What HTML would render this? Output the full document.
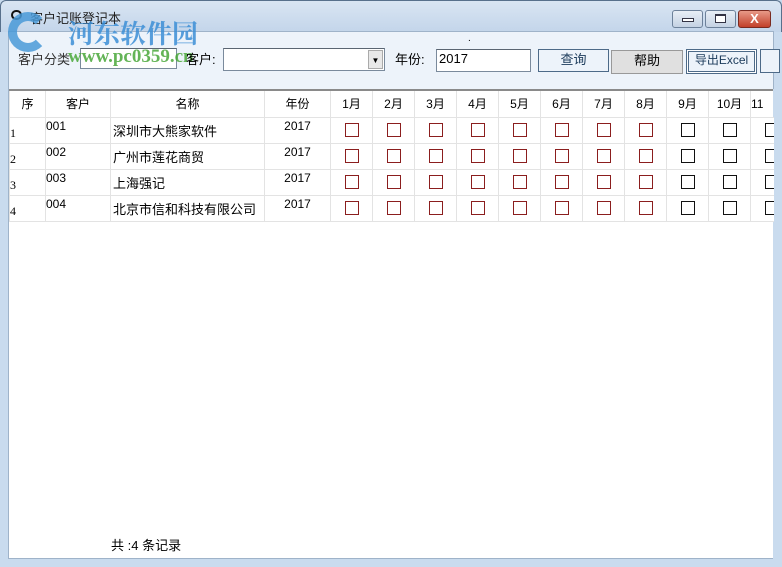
<!DOCTYPE html>
<html><head><meta charset="utf-8"><style>
*{margin:0;padding:0;box-sizing:border-box}
body{width:782px;height:567px;overflow:hidden;background:#c9dbee;font-family:"Liberation Sans","Noto Sans CJK SC",sans-serif;font-size:12px;color:#000;position:relative}
.abs{position:absolute}
.title{left:0;top:0;width:782px;height:32px;background:linear-gradient(#d9e5f3,#c3d5ea);border:1px solid #58708c;border-bottom:none;border-radius:6px 6px 0 0}
.client{left:8px;top:31px;width:766px;height:528px;background:#edf3fa;border:1px solid #9fb3c9}
.wb{top:10px;height:18px;border:1px solid #6d819a;border-radius:3px;background:linear-gradient(#e8eef6,#c4d2e3)}
.input{background:#fff;border:1px solid #7a8a9c;border-top-color:#5a6572}
.btn{border:1px solid #4d6a88;background:#edf3fa;text-align:center;line-height:20px;font-size:13px;color:#1b3a5a}
table{border-collapse:collapse;position:absolute;left:9px;top:89px;background:#fff;table-layout:fixed}
td{border:1px solid #e3e3e3;height:26px;font-size:12px;vertical-align:middle;overflow:hidden;white-space:nowrap}
.hd td{text-align:center;height:27px;border-top:2px solid #8a8a8a}
.cb{display:inline-block;width:14px;height:14px;border:1px solid #8b1e1e}
.cb.k{border-color:#111}
</style></head><body>
<div class="abs title"></div>
<div class="abs" style="left:11px;top:10px;width:11px;height:10px;border:2px solid #111;border-radius:5px"></div>
<div class="abs" style="left:30px;top:8px;font-size:13px;color:#222">客户记账登记本</div>
<div class="abs wb" style="left:672px;width:31px"><div style="margin:7px auto;width:12px;height:4px;border:1px solid #334;background:#fff"></div></div>
<div class="abs wb" style="left:705px;width:31px"><div style="margin:3px auto;width:11px;height:9px;border:1px solid #334;border-top-width:2px;background:#fff"></div></div>
<div class="abs wb" style="left:738px;width:33px;background:linear-gradient(#e89a88,#c2402a);border-color:#7a2a20;color:#fff;text-align:center;font-weight:bold;line-height:15px;font-size:13px">X</div>
<div class="abs client"></div>
<div class="abs" style="left:9px;top:89px;width:764px;height:469px;background:#fff"></div>
<div class="abs" style="left:8px;top:12px;width:40px;height:40px;border-radius:50%;border:9px solid #4a9ad8;border-right-color:transparent;opacity:.85"></div>
<div class="abs" style="left:68px;top:14px;font-size:26px;font-weight:bold;color:#3c8fd6;opacity:.85;font-family:'Noto Serif CJK SC',serif">河东软件园</div>
<div class="abs" style="left:18px;top:49px;font-size:13px;color:#333">客户分类</div>
<div class="abs input" style="left:80px;top:48px;width:97px;height:21px"></div>
<div class="abs" style="left:68px;top:46px;font-size:19px;font-weight:bold;color:#4aa83a;opacity:.85;font-family:'Liberation Serif',serif">www.pc0359.cn</div>
<div class="abs" style="left:186px;top:49px;font-size:13px">客户:</div>
<div class="abs input" style="left:223px;top:48px;width:162px;height:23px"><div style="position:absolute;right:1px;top:1px;width:15px;height:19px;background:#e8e8e8;border:1px solid #aaa;font-size:8px;text-align:center;line-height:19px">▼</div></div>
<div class="abs" style="left:395px;top:49px;font-size:13px">年份:</div>
<div class="abs input" style="left:436px;top:49px;width:95px;height:23px;padding:1px 2px;font-size:13px">2017</div>
<div class="abs" style="left:468px;top:33px;font-size:10px">.</div>
<div class="abs btn" style="left:538px;top:49px;width:71px;height:23px">查询</div>
<div class="abs btn" style="left:611px;top:50px;width:72px;height:24px;background:#e0e0e0;border-color:#999;color:#000">帮助</div>
<div class="abs btn" style="left:686px;top:49px;width:71px;height:25px;font-size:12px;box-shadow:inset 0 0 0 1px #fff,inset 0 0 0 2px #4d6a88">导出Excel</div>
<div class="abs btn" style="left:760px;top:49px;width:20px;height:24px"></div>
<table style="width:764px">
<colgroup><col style="width:36px"><col style="width:65px"><col style="width:154px"><col style="width:66px"><col span="10" style="width:42px"><col style="width:23px"></colgroup>
<tr class="hd"><td>序</td><td>客户</td><td>名称</td><td>年份</td><td>1月</td><td>2月</td><td>3月</td><td>4月</td><td>5月</td><td>6月</td><td>7月</td><td>8月</td><td>9月</td><td>10月</td><td style="border-right:none;text-align:left">11</td></tr>
</table>
<div class="abs" style="left:773px;top:89px;width:9px;height:470px;background:#c9dbee"></div>
<div class="abs" style="left:9px;top:117px;width:764px" id="rows"></div>
<script>
var d=[["1","001","深圳市大熊家软件"],["2","002","广州市莲花商贸"],["3","003","上海强记"],["4","004","北京市信和科技有限公司"]];
var h='<table style="left:0;top:0;width:764px"><colgroup><col style="width:36px"><col style="width:65px"><col style="width:154px"><col style="width:66px"><col span="10" style="width:42px"><col style="width:23px"></colgroup>';
d.forEach(function(r){h+='<tr><td style="padding-top:6px;font-family:Liberation Serif">'+r[0]+'</td><td style="vertical-align:top;padding-top:1px">'+r[1]+'</td><td style="padding:2px;font-size:13px">'+r[2]+'</td><td style="text-align:center;vertical-align:top;padding-top:1px">2017</td>';
for(var i=0;i<11;i++)h+='<td style="text-align:center;padding-top:2px'+(i==10?';border-right:none;text-align:left;padding-left:14px':'')+'"><span class="cb'+(i>7?' k':'')+'"></span></td>';
h+='</tr>';});
document.getElementById('rows').innerHTML=h+'</table>';
</script>
<div class="abs" style="left:111px;top:535px;font-size:13px">共 :4 条记录</div>
</body></html>
